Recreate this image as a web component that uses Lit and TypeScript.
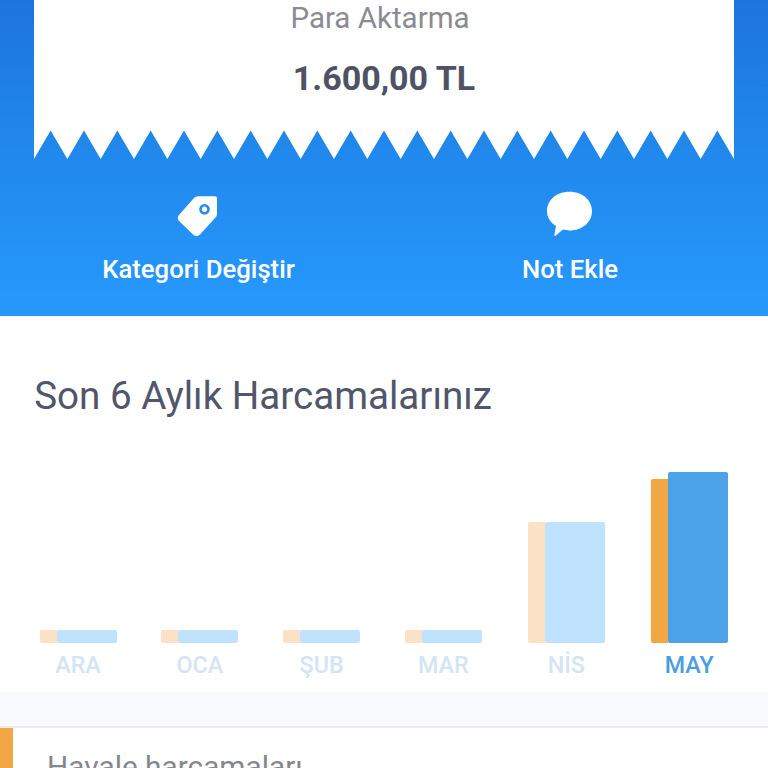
import { LitElement, html, css, svg } from 'lit';
import { customElement, property } from 'lit/decorators.js';
import { classMap } from 'lit/directives/class-map.js';

interface Month {
  label: string;
  spent: number;
  average: number;
  current?: boolean;
}

const MONTHS: Month[] = [
  { label: 'ARA', spent: 13, average: 13 },
  { label: 'OCA', spent: 13, average: 13 },
  { label: 'ŞUB', spent: 13, average: 13 },
  { label: 'MAR', spent: 13, average: 13 },
  { label: 'NİS', spent: 121.5, average: 121.5 },
  { label: 'MAY', spent: 170.6, average: 164, current: true }
];

const TEETH = 21;

@customElement('receipt-card')
export class ReceiptCard extends LitElement {
  @property() name = '';
  @property() amount = '';

  static styles = css`
    :host {
      display: block;
    }

    .paper {
      box-sizing: border-box;
      height: 130px;
      background: white;
      text-align: center;
    }

    .name {
      padding-right: 8px;
      font-size: 29.5px;
      line-height: 36px;
      color: #8a8c94;
    }

    .amount {
      margin-top: 22px;
      font-size: 34px;
      font-weight: 700;
      line-height: 40px;
      color: #4e5265;
    }

    .edge {
      display: block;
      width: 100%;
      height: 29px;
      fill: white;
    }
  `;

  edgePath() {
    let d = 'M0 0';
    for (let i = 0; i < TEETH; i++) {
      d += `L${i * 10} 29L${i * 10 + 5} 0.5`;
    }
    return `${d}L${TEETH * 10} 29V0Z`;
  }

  render() {
    return html`
      <div class="paper">
        <div class="name">${this.name}</div>
        <div class="amount">${this.amount}</div>
      </div>
      <svg class="edge" viewBox="0 0 210 29" preserveAspectRatio="none">
        ${svg`<path d=${this.edgePath()} />`}
      </svg>
    `;
  }
}

@customElement('spending-chart')
export class SpendingChart extends LitElement {
  @property({ attribute: false }) months: Month[] = [];

  static styles = css`
    :host {
      display: grid;
      grid-template-columns: repeat(3, 121.8px) repeat(2, 122.9px) 77px;
    }

    .month {
      width: 77px;
    }

    .bars {
      display: flex;
      align-items: flex-end;
      height: 171px;
    }

    .average {
      width: 17px;
      border-radius: 2px 0 0 2px;
      background: #fbe2c5;
    }

    .spent {
      flex: 1;
      border-radius: 2px;
      background: #bfe3fe;
    }

    .label {
      margin-top: 8px;
      font-size: 23.3px;
      font-weight: 500;
      line-height: 28px;
      text-align: center;
      color: #d3e5f5;
    }

    .current .average {
      background: #f2a744;
    }

    .current .spent {
      background: #4ba2e7;
    }

    .current .label {
      color: #4b9de0;
    }
  `;

  render() {
    return html`
      ${this.months.map(
        (m) => html`
          <div class=${classMap({ month: true, current: !!m.current })}>
            <div class="bars">
              <div class="average" style="height: ${m.average}px"></div>
              <div class="spent" style="height: ${m.spent}px"></div>
            </div>
            <div class="label">${m.label}</div>
          </div>
        `
      )}
    `;
  }
}

@customElement('app-root')
export class AppRoot extends LitElement {
  static styles = css`
    :host {
      display: flex;
      flex-direction: column;
      height: 768px;
      overflow: hidden;
      background: white;
      font-family: Roboto, 'Liberation Sans', sans-serif;
    }

    .hero {
      flex: none;
      box-sizing: border-box;
      height: 316px;
      padding: 0 34px;
      background: linear-gradient(#1d74dd, #2086ea 42%, #2799fd);
    }

    .actions {
      display: grid;
      grid-template-columns: 329px 414px;
      margin-top: 29px;
    }

    .action {
      display: flex;
      flex-direction: column;
      align-items: center;
      font-size: 25.7px;
      font-weight: 500;
      line-height: 30px;
      color: white;
    }

    .icon {
      width: 50px;
      height: 50px;
      margin-bottom: 16px;
    }

    .tag {
      margin-right: 2px;
    }

    .history {
      flex: none;
      box-sizing: border-box;
      height: 376px;
      padding: 58px 0 0 39.5px;
    }

    h2 {
      margin: 0 0 54px -5.3px;
      font-size: 38.6px;
      font-weight: 400;
      line-height: 44px;
      color: #51566a;
    }

    .gap {
      flex: none;
      height: 34px;
      background: #f9fafd;
      border-bottom: 2px solid #ebebed;
    }

    .row {
      flex: none;
      height: 90px;
      padding: 21px 0 0 34px;
      border-left: 13px solid #f2a744;
      font-size: 29.8px;
      line-height: 36px;
      color: #85878f;
    }
  `;

  render() {
    return html`
      <div class="hero">
        <receipt-card name="Para Aktarma" amount="1.600,00 TL"></receipt-card>
        <div class="actions">
          <div class="action">
            <svg class="icon tag" viewBox="0 0 50 50">
              <path
                fill="white"
                fill-rule="evenodd"
                d="M25 8.300H42Q44 8.300 44 10.300V26Q44 28 42.500 29.500L27 46.500Q23.500 49.500 20 46.500L6 33Q3.500 30 6 27L21 10Q22.800 8.300 25 8.300ZM31.500 16a5.300 5.300 0 1 0 0.010 0ZM31.500 18.600a2.700 2.700 0 1 1-0.010 0Z"
              />
            </svg>
            <span>Kategori Değiştir</span>
          </div>
          <div class="action">
            <svg class="icon" viewBox="0 0 50 50">
              <path
                fill="white"
                d="M24.500 3.700C37.500 3.700 47 12 47 23C47 34 37.500 42.500 24.500 42.500C22.500 42.500 20 42 18 41.600C15 43.500 12.500 47 10 48Q9 48 9.500 46L11 38C5 34.500 2 29 2 23C2 12 11.500 3.700 24.500 3.700Z"
              />
            </svg>
            <span>Not Ekle</span>
          </div>
        </div>
      </div>
      <div class="history">
        <h2>Son 6 Aylık Harcamalarınız</h2>
        <spending-chart .months=${MONTHS}></spending-chart>
      </div>
      <div class="gap"></div>
      <div class="row">Havale harcamaları</div>
    `;
  }
}
